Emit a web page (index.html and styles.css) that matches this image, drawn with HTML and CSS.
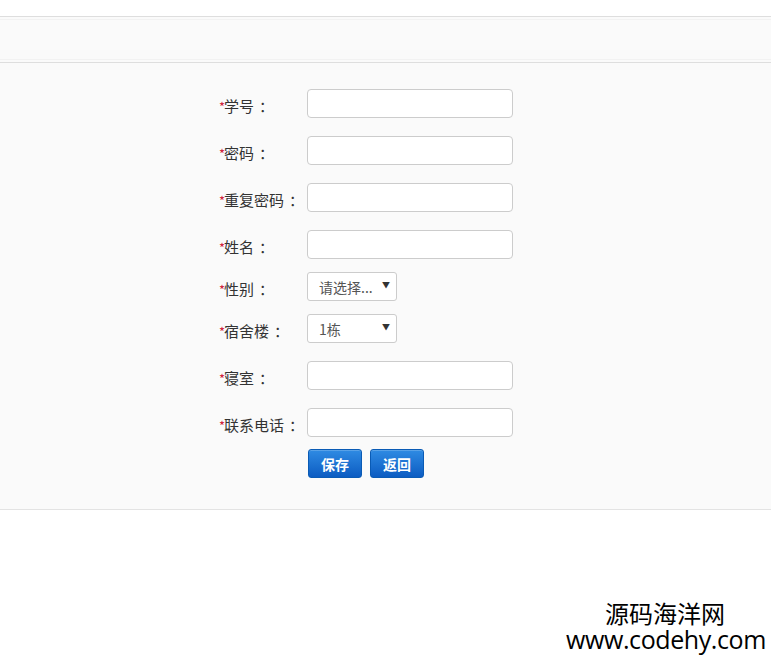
FILE: index.html
```html
<!DOCTYPE html>
<html lang="zh-CN">
<head>
    <meta charset="UTF-8">
    <meta name="viewport" content="width=device-width, initial-scale=1.0">
    <title>添加学生</title>
    <link rel="stylesheet" href="styles.css">
</head>
<body>
    <div class="top"></div>
    <div class="bar"><div class="bar-in"></div></div>
    <div class="main">
        <form class="form">
            <div class="row">
                <label class="lab"><i>*</i>学号<em>：</em></label>
                <input type="text" class="txt">
            </div>
            <div class="row">
                <label class="lab"><i>*</i>密码<em>：</em></label>
                <input type="password" class="txt">
            </div>
            <div class="row">
                <label class="lab"><i>*</i>重复密码<em>：</em></label>
                <input type="password" class="txt">
            </div>
            <div class="row short">
                <label class="lab"><i>*</i>姓名<em>：</em></label>
                <input type="text" class="txt">
            </div>
            <div class="row short">
                <label class="lab"><i>*</i>性别<em>：</em></label>
                <div class="sel"><span>请选择...</span><b>▼</b></div>
            </div>
            <div class="row">
                <label class="lab"><i>*</i>宿舍楼<em>：</em></label>
                <div class="sel"><span>1栋</span><b>▼</b></div>
            </div>
            <div class="row">
                <label class="lab"><i>*</i>寝室<em>：</em></label>
                <input type="text" class="txt">
            </div>
            <div class="row tight">
                <label class="lab"><i>*</i>联系电话<em>：</em></label>
                <input type="text" class="txt">
            </div>
            <div class="btns">
                <button type="button" class="btn">保存</button>
                <button type="button" class="btn">返回</button>
            </div>
        </form>
    </div>
    <div class="mark">
        <div class="mark-cn">源码海洋网</div>
        <div class="mark-en">www.codehy.com</div>
    </div>
</body>
</html>
```
FILE: styles.css
```css
body{margin:0; background:#fff; font-family:"Noto Sans CJK SC","Liberation Sans",sans-serif; color:#333; position:relative; height:657px; overflow:hidden;}
.top{height:16px;}
.bar{border-top:1px solid #dedede; background:#fafafa; padding:2px 0 2px;}
.bar-in{height:39px; border-top:1px solid #f2f2f2; border-bottom:1px solid #f2f2f2;}
.main{border-top:1px solid #dedede; border-bottom:1px solid #e3e3e3; background:#fafafa; padding:26px 0 31px;}
.form{width:333px; margin:0 auto;}
.row{display:flex; align-items:center; height:29px; margin-bottom:18px;}
.row.short{margin-bottom:13px;}
.row.tight{margin-bottom:12px;}
.lab{width:88px; font-size:15px; padding-top:4px; white-space:nowrap;}
.lab i{font-style:normal; color:#d0223a; font-size:13px; margin-right:-1px;}
.lab em{font-style:normal; display:inline-block; width:15px; padding-left:5px; text-align:center;}
.txt{width:206px; height:29px; box-sizing:border-box; border:1px solid #ccc; border-radius:4px; background:#fff; padding:0 8px; margin:0; outline:none;}
.sel{width:90px; height:29px; box-sizing:border-box; border:1px solid #ccc; border-radius:3px; background:#fff; display:flex; align-items:center; justify-content:space-between; padding:0 6px 0 11px; font-size:14px; color:#555;}
.sel b{font-size:8px; color:#333; font-weight:normal; margin-top:-5px;}
.btns{display:flex; gap:8px; padding-left:89px;}
.btn{width:54px; height:29px; border:1px solid #0a5bb5; border-radius:3px; background:linear-gradient(#2f8be3,#0c5cc2); color:#fff; font-family:inherit; font-size:14px; font-weight:bold; padding:0; box-shadow:inset 0 1px 0 rgba(255,255,255,0.2);}
.mark{position:absolute; right:5px; top:601px; text-align:right; color:#000;}
.mark-cn{font-size:24px; line-height:24px; margin-right:41px;}
.mark-en{font-family:"Open Sans","DejaVu Sans",sans-serif; font-size:25px; line-height:28px; letter-spacing:-0.4px;}
```
